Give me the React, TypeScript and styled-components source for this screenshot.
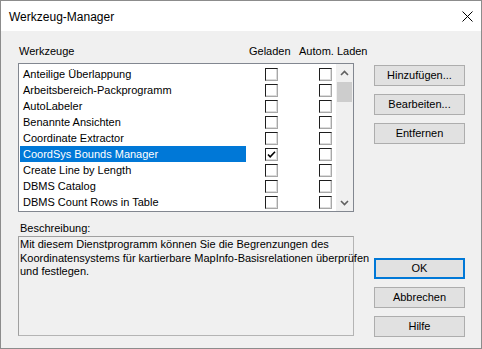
import React from "react";
import styled, { createGlobalStyle } from "styled-components";

const GlobalStyle = createGlobalStyle`
  html, body { margin: 0; padding: 0; background: #ffffff; }
  body { font-family: "Liberation Sans", Arial, sans-serif; }
`;

const Dialog = styled.div`
  width: 482px;
  height: 349px;
  box-sizing: border-box;
  border: 1px solid #8c8c8c;
  display: flex;
  flex-direction: column;
  background: #f0f0f0;
  font-family: "Liberation Sans", Arial, sans-serif;
  font-size: 11px;
  color: #000;
`;

const TitleBar = styled.div`
  height: 30px;
  flex: none;
  background: #ffffff;
  display: flex;
  align-items: center;
  justify-content: space-between;
  padding: 0 8px 0 8px;
  font-size: 12px;
`;

const Title = styled.span`
  line-height: 14px;
  padding-top: 1px;
`;

const Body = styled.div`
  flex: 1;
  display: grid;
  grid-template-columns: 336px 91px;
  column-gap: 20px;
  padding: 0 16px 0 17px;
`;

const LeftCol = styled.div`
  display: flex;
  flex-direction: column;
`;

const HeaderRow = styled.div`
  display: grid;
  grid-template-columns: 230px 50px auto;
  height: 13px;
  line-height: 13px;
  margin-top: 14px;
  padding-left: 1px;
  white-space: nowrap;
`;

const ListBox = styled.div`
  margin-top: 5px;
  height: 149px;
  box-sizing: border-box;
  border: 1px solid #828790;
  background: #ffffff;
  display: flex;
`;

const Rows = styled.div`
  flex: 1;
  padding: 2px 0 0 1px;
  overflow: hidden;
`;

const Row = styled.div`
  display: flex;
  align-items: center;
  height: 16px;
`;

const Name = styled.div<{ $sel?: boolean }>`
  width: 226px;
  height: 16px;
  line-height: 16px;
  padding-left: 3px;
  box-sizing: border-box;
  white-space: nowrap;
  background: ${(p) => (p.$sel ? "#0078d7" : "transparent")};
  color: ${(p) => (p.$sel ? "#ffffff" : "#000000")};
`;

const Check = styled.div<{ $ml: number }>`
  width: 13px;
  height: 13px;
  box-sizing: border-box;
  margin-left: ${(p) => p.$ml}px;
  margin-top: 1px;
  border: 1px solid;
  border-color: #1e1e1e #a8a8a8 #a8a8a8 #1e1e1e;
  box-shadow: inset -1px -1px 0 #dcdcdc;
  background: #ffffff;
  display: flex;
  align-items: center;
  justify-content: center;
`;

const ScrollBar = styled.div`
  width: 17px;
  flex: none;
  background: #f0f0f0;
  display: flex;
  flex-direction: column;
`;

const ScrollArrow = styled.div<{ $h: number }>`
  height: ${(p) => p.$h}px;
  display: flex;
  align-items: center;
  justify-content: center;
`;

const Thumb = styled.div`
  height: 20px;
  margin: 0 1px;
  background: #cdcdcd;
`;

const ScrollTrack = styled.div`
  flex: 1;
`;

const DescLabel = styled.div`
  margin-top: 10px;
  margin-left: 2px;
  height: 13px;
  line-height: 13px;
`;

const DescBox = styled.div`
  margin-top: 1px;
  height: 100px;
  box-sizing: border-box;
  border: 1px solid #a0a0a0;
  border-right-color: #b4b4b4;
  border-bottom-color: #b4b4b4;
  padding: 1px 0 0 1px;
  line-height: 13.5px;
  white-space: nowrap;
`;

const RightCol = styled.div`
  display: flex;
  flex-direction: column;
  justify-content: space-between;
  padding: 34px 0 11px 0;
`;

const ButtonGroup = styled.div`
  display: flex;
  flex-direction: column;
  gap: 8px;
`;

const Button = styled.div<{ $default?: boolean }>`
  height: 21px;
  box-sizing: border-box;
  background: #e1e1e1;
  border: ${(p) => (p.$default ? "2px solid #0078d7" : "1px solid #adadad")};
  display: flex;
  align-items: center;
  justify-content: center;
  font-size: 11px;
  line-height: 13px;
`;

const items = [
  "Anteilige Überlappung",
  "Arbeitsbereich-Packprogramm",
  "AutoLabeler",
  "Benannte Ansichten",
  "Coordinate Extractor",
  "CoordSys Bounds Manager",
  "Create Line by Length",
  "DBMS Catalog",
  "DBMS Count Rows in Table",
];

const CheckMark = () => (
  <svg width="9" height="9" viewBox="0 0 9 9">
    <path d="M1 4.5 L3.2 6.8 L8 1.8" fill="none" stroke="#000" strokeWidth="1.6" />
  </svg>
);

const CloseIcon = () => (
  <svg width="11" height="11" viewBox="0 0 11 11">
    <path d="M0.5 0.5 L10.5 10.5 M10.5 0.5 L0.5 10.5" stroke="#000" strokeWidth="1" />
  </svg>
);

const Chevron = ({ up }: { up?: boolean }) => (
  <svg width="9" height="6" viewBox="0 0 9 6">
    <path
      d={up ? "M1 5 L4.5 1.5 L8 5" : "M1 1 L4.5 4.5 L8 1"}
      fill="none"
      stroke="#606060"
      strokeWidth="1.6"
    />
  </svg>
);

export default function App() {
  return (
    <>
      <GlobalStyle />
      <Dialog>
        <TitleBar>
          <Title>Werkzeug-Manager</Title>
          <CloseIcon />
        </TitleBar>
        <Body>
          <LeftCol>
            <HeaderRow>
              <span>Werkzeuge</span>
              <span>Geladen</span>
              <span>Autom. Laden</span>
            </HeaderRow>
            <ListBox>
              <Rows>
                {items.map((name, i) => (
                  <Row key={name}>
                    <Name $sel={i === 5}>{name}</Name>
                    <Check $ml={19}>{i === 5 && <CheckMark />}</Check>
                    <Check $ml={41} />
                  </Row>
                ))}
              </Rows>
              <ScrollBar>
                <ScrollArrow $h={18}>
                  <Chevron up />
                </ScrollArrow>
                <Thumb />
                <ScrollTrack />
                <ScrollArrow $h={17}>
                  <Chevron />
                </ScrollArrow>
              </ScrollBar>
            </ListBox>
            <DescLabel>Beschreibung:</DescLabel>
            <DescBox>
              Mit diesem Dienstprogramm können Sie die Begrenzungen des
              <br />
              Koordinatensystems für kartierbare MapInfo-Basisrelationen überprüfen
              <br />
              und festlegen.
            </DescBox>
          </LeftCol>
          <RightCol>
            <ButtonGroup>
              <Button>Hinzufügen...</Button>
              <Button>Bearbeiten...</Button>
              <Button>Entfernen</Button>
            </ButtonGroup>
            <ButtonGroup>
              <Button $default>OK</Button>
              <Button>Abbrechen</Button>
              <Button>Hilfe</Button>
            </ButtonGroup>
          </RightCol>
        </Body>
      </Dialog>
    </>
  );
}
